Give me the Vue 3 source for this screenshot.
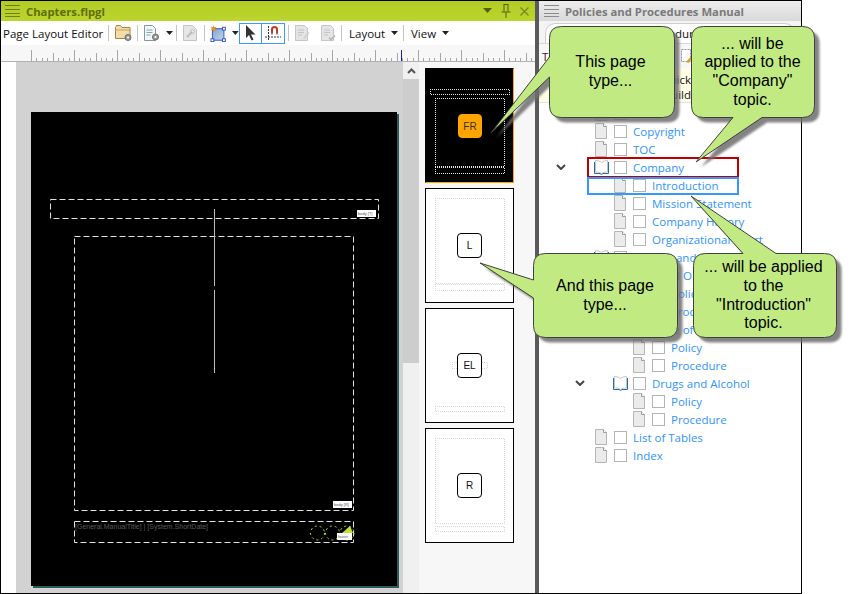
<template>
  <div class="screen">
    <!-- Page layout editor -->
    <section class="editor">
      <header class="titlebar titlebar-editor">
        <svg class="grip" width="16" height="12" viewBox="0 0 16 12">
          <path d="M0 .5h15M0 4.500h15M0 8.500h15M0 11.500h15" stroke="#6f7f12" fill="none" />
        </svg>
        <span class="title-text">Chapters.flpgl</span>
        <span class="title-actions">
          <svg width="9" height="6" viewBox="0 0 9 6"><path d="M0 0h9L4.500 5z" fill="#55600e" /></svg>
          <svg width="10" height="14" viewBox="0 0 10 14">
            <path d="M2.500.5h5M3 .5v7M7 .5v7M.5 8h9M5 8v6" stroke="#55600e" fill="none" />
          </svg>
          <svg width="9" height="9" viewBox="0 0 9 9"><path d="M.5.500l8 8M8.500.500l-8 8" stroke="#7b8a1e" stroke-width="1.4" /></svg>
        </span>
      </header>

      <div class="toolbar">
        <span class="tb-label">Page Layout Editor</span>
        <i class="sep"></i>
        <span class="slot slot-folder">
          <svg width="17" height="16" viewBox="0 0 17 16">
            <path d="M.5 2.500l1-2h4l1.500 2h8v11H.5z" fill="#f3dda6" stroke="#a9823f" />
            <path d="M.5 5h15" stroke="#c9a45e" />
            <circle cx="13" cy="12.500" r="3" fill="#9a9a9a" stroke="#6d6d6d" />
            <circle cx="13" cy="12.500" r="1" fill="#fff" />
          </svg>
        </span>
        <i class="sep"></i>
        <span class="slot slot-doc">
          <svg width="17" height="16" viewBox="0 0 17 16">
            <path d="M1.500.5h8l3 3v12h-11z" fill="#f2f6f6" stroke="#7f9aa0" />
            <path d="M3.500 5h6M3.500 7.500h6M3.500 10h4" stroke="#8aa3a8" />
            <circle cx="12.500" cy="12" r="3" fill="#9a9a9a" stroke="#6d6d6d" />
            <circle cx="12.500" cy="12" r="1" fill="#fff" />
          </svg>
          <svg class="caret" width="7" height="4" viewBox="0 0 7 4"><path d="M0 0h7L3.500 4z" fill="#222" /></svg>
        </span>
        <i class="sep"></i>
        <span class="slot slot-wrench">
          <svg width="14" height="16" viewBox="0 0 14 16">
            <path d="M.5.500h9l4 4v11H.5z" fill="#e6e6e6" stroke="#c4c4c4" />
            <path d="M4 12l5-5" stroke="#bdbdbd" stroke-width="2" />
            <circle cx="9.500" cy="6.500" r="2" fill="none" stroke="#bdbdbd" />
          </svg>
        </span>
        <i class="sep"></i>
        <span class="slot slot-shape">
          <svg width="17" height="17" viewBox="0 0 17 17">
            <defs>
              <linearGradient id="shapeFill" x1="0" y1="0" x2="1" y2="1">
                <stop offset="0" stop-color="#7fa3cf" />
                <stop offset="1" stop-color="#c6d6e6" />
              </linearGradient>
            </defs>
            <rect x="2.500" y="3.500" width="12" height="12" fill="url(#shapeFill)" stroke="#2f55c8" />
            <rect x="13" y="2" width="3" height="3" fill="#fff" stroke="#2f55c8" />
            <rect x="1" y="14" width="3" height="3" fill="#fff" stroke="#2f55c8" />
            <rect x="13" y="14" width="3" height="3" fill="#fff" stroke="#2f55c8" />
            <path d="M3.500 0l1 2 2-.5-1 2 1.500 1.500-2.200.2L4 7.500 3 5.200l-2.500 0 1.500-1.700L1 1.500l2 .5z" fill="#f08a1c" />
          </svg>
          <svg class="caret" width="7" height="4" viewBox="0 0 7 4"><path d="M0 0h7L3.500 4z" fill="#222" /></svg>
        </span>
        <span class="tool-btn">
          <svg width="11" height="16" viewBox="0 0 11 16">
            <path d="M1 0v13l3-3 2.500 5.500 2-1L6 9.500h4.500z" fill="#333" />
          </svg>
        </span>
        <span class="tool-btn tool-btn-next">
          <svg width="17" height="16" viewBox="0 0 17 16">
            <path d="M6 8V4.500a3.500 3.500 0 0 1 7 0V8h-2V4.500a1.500 1.500 0 0 0-3 0V8z" fill="#c0392b" />
            <path d="M6 8h2v1.500H6zM11 8h2v1.500h-2z" fill="#8a8a8a" />
            <path d="M3.500 1v14M0 12h16" stroke="#333" stroke-dasharray="2 1" fill="none" />
          </svg>
        </span>
        <i class="sep sep-after-tools"></i>
        <span class="slot slot-dim">
          <svg width="15" height="16" viewBox="0 0 15 16">
            <path d="M.5.500h9l3 3v12H.5z" fill="#e4e4e4" stroke="#c6c6c6" />
            <path d="M3 5h6M3 7.500h6M3 10h4" stroke="#c4c4c4" />
            <path d="M8 13l5-6 1.500 1-5 6z" fill="#d0d0d0" />
          </svg>
        </span>
        <span class="slot slot-dim">
          <svg width="15" height="16" viewBox="0 0 15 16">
            <path d="M.5.500h9l3 3v12H.5z" fill="#e4e4e4" stroke="#c6c6c6" />
            <path d="M3 5h6M3 7.500h6M3 10h4" stroke="#c4c4c4" />
            <path d="M8 12.500l2 2 4-4" stroke="#b4b4b4" stroke-width="1.600" fill="none" />
          </svg>
        </span>
        <i class="sep"></i>
        <span class="slot slot-menu">
          Layout
          <svg class="caret" width="7" height="4" viewBox="0 0 7 4"><path d="M0 0h7L3.500 4z" fill="#222" /></svg>
        </span>
        <i class="sep"></i>
        <span class="slot slot-menu slot-view">
          View
          <svg class="caret" width="7" height="4" viewBox="0 0 7 4"><path d="M0 0h7L3.500 4z" fill="#222" /></svg>
        </span>
      </div>

      <div class="ruler">
        <svg width="535" height="17" viewBox="0 0 535 17">
          <path :d="rulerTicks" stroke="#a6a6a6" fill="none" />
          <path d="M400.500 5v11" stroke="#1a1aa8" fill="none" />
          <path d="M0 16.500h535" stroke="#b0b0b0" fill="none" />
        </svg>
      </div>

      <div class="workspace">
        <div class="gutter"></div>
        <div class="canvas">
          <div class="page">
            <svg class="page-marks" width="366" height="474" viewBox="0 0 366 474">
              <rect x="19.500" y="87.500" width="328" height="19" class="dash" />
              <rect x="43.500" y="124.500" width="279" height="274" class="dash" />
              <rect x="43.500" y="409.500" width="279" height="21" class="dash" />
              <path d="M183.500 97v77M183.500 178v83" stroke="#bdbdbd" fill="none" />
              <g fill="none" stroke="#c6de30" stroke-dasharray="2 3">
                <circle cx="286.500" cy="421" r="7" />
                <circle cx="301.500" cy="421" r="7" />
                <circle cx="316" cy="421" r="7" />
              </g>
              <path d="M311 421l8-7 3 7z" fill="#c6de30" />
            </svg>
            <span class="tag tag-header">body [T]</span>
            <span class="tag tag-main">body [R]</span>
            <span class="tag tag-footer">footer</span>
            <span class="footer-text">[General.ManualTitle] | [System.ShortDate]</span>
          </div>
        </div>
        <div class="scrollbar">
          <div class="scroll-up">
            <svg width="9" height="6" viewBox="0 0 9 6"><path d="M1 5l3.500-3.500L8 5" stroke="#555" stroke-width="2" fill="none" /></svg>
          </div>
          <div class="scroll-thumb"></div>
        </div>
        <div class="thumbs">
          <div v-for="t in thumbs" :key="t.name" :class="['thumb', { 'thumb-active': t.active }]">
            <svg class="thumb-marks" width="89" height="115" viewBox="0 0 89 115">
              <rect
                v-for="(b, i) in t.boxes"
                :key="i"
                :x="b[0] + 0.5"
                :y="b[1] + 0.5"
                :width="b[2]"
                :height="b[3]"
                class="dots"
              />
            </svg>
            <span class="badge">{{ t.name }}</span>
          </div>
        </div>
      </div>
    </section>

    <div class="divider"></div>

    <!-- Outline / TOC panel -->
    <section class="outline">
      <header class="titlebar titlebar-outline">
        <svg class="grip" width="16" height="12" viewBox="0 0 16 12">
          <path d="M0 .5h15M0 4.500h15M0 8.500h15M0 11.500h15" stroke="#8b8b8b" fill="none" />
        </svg>
        <span class="title-text">Policies and Procedures Manual</span>
      </header>

      <div class="tabstrip">
        <span class="tab">Policies and Procedures</span>
      </div>
      <div class="outline-tools">
        <span class="outline-t">Tools</span>
        <svg class="outline-icon" width="14" height="16" viewBox="0 0 14 16">
          <path d="M.5 1.500h9v12h-9z" fill="#fff" stroke="#999" stroke-dasharray="2 1" />
          <path d="M5 14l6-7 1.500 1-5 7z" fill="#d9a21f" />
        </svg>
      </div>
      <div class="hintbar">
        <span>Quick</span>
        <span>Build</span>
      </div>

      <div class="tree">
        <div
          v-for="row in rows"
          :key="row.label + row.top"
          class="row"
          :style="{ paddingLeft: 15 + row.level * 19 + 'px' }"
        >
          <span class="chev">
            <svg v-if="row.book" width="10" height="6" viewBox="0 0 10 6">
              <path d="M1 1l4 4 4-4" stroke="#444" stroke-width="2" fill="none" />
            </svg>
          </span>
          <svg v-if="row.book" class="ico ico-book" width="15" height="15" viewBox="0 0 15 15">
            <path d="M7.500 2.500C6 1 3 .5 1.500.5V12c2 0 4.500.3 6 1.500 1.500-1.200 4-1.500 6-1.500V.5c-1.500 0-4.500.5-6 2z" fill="#fff" stroke="#b9c6d0" />
            <path d="M.5 2v11.500h5.500l1.500 1 1.500-1h5.500V2" fill="none" stroke="#2a6aa0" />
          </svg>
          <svg v-else class="ico ico-file" width="12" height="16" viewBox="0 0 12 16">
            <path d="M.5.500h8l3 3v12H.5z" fill="#ebebeb" stroke="#b5b5b5" />
            <path d="M8.500.500v3h3" fill="#fff" stroke="#9b9b9b" />
          </svg>
          <span class="check"></span>
          <span :class="['label', { 'label-plain': row.plain }]">{{ row.label }}</span>
        </div>
        <div class="mark mark-company"></div>
        <div class="mark mark-intro"></div>
      </div>
    </section>

    <!-- Callouts lie over both panels -->
    <svg class="callouts" width="851" height="594" viewBox="0 0 851 594">
      <g v-for="c in callouts" :key="c.id">
        <path :d="c.path" class="bubble-shadow" transform="translate(5 5)" />
      </g>
      <g v-for="c in callouts" :key="c.id + '-b'">
        <path :d="c.path" class="bubble" />
      </g>
    </svg>
    <div v-for="c in callouts" :key="c.id + '-t'" :class="['callout-text', c.id]">{{ c.text }}</div>
  </div>
</template>

<script setup>
import { computed } from 'vue'

// rounded rect with a tail spliced into one edge, points listed clockwise
const bubble = ({ x, y, w, h, edge, tail }) => {
  const r = 12
  const t = tail.map((p) => `L${p[0]} ${p[1]}`).join(' ')
  return [
    `M${x + r} ${y}`,
    edge === 'top' ? t : '',
    `H${x + w - r} Q${x + w} ${y} ${x + w} ${y + r}`,
    `V${y + h - r} Q${x + w} ${y + h} ${x + w - r} ${y + h}`,
    edge === 'bottom' ? t : '',
    `H${x + r} Q${x} ${y + h} ${x} ${y + h - r}`,
    edge === 'left' ? t : '',
    `V${y + r} Q${x} ${y} ${x + r} ${y} Z`
  ].join(' ')
}

const callouts = [
  {
    id: 'c-page',
    text: 'This page\ntype...',
    path: bubble({ x: 549.5, y: 26.5, w: 125, h: 91, edge: 'left', tail: [[549.5, 77], [491, 133], [549.5, 57]] })
  },
  {
    id: 'c-company',
    text: '... will be\napplied to the\n"Company"\ntopic.',
    path: bubble({ x: 691.5, y: 26.5, w: 123, h: 91, edge: 'bottom', tail: [[762, 117.5], [696, 162], [733, 117.5]] })
  },
  {
    id: 'c-other',
    text: 'And this page\ntype...',
    path: bubble({ x: 533.5, y: 253.5, w: 144, h: 84, edge: 'left', tail: [[533.5, 298], [480, 263], [533.5, 280]] })
  },
  {
    id: 'c-intro',
    text: '... will be applied\nto the\n"Introduction"\ntopic.',
    path: bubble({ x: 693.5, y: 253.5, w: 143, h: 84, edge: 'top', tail: [[743, 253.5], [691, 196], [776, 253.5]] })
  }
]

const rulerTicks = computed(() => {
  let d = ''
  for (let i = 0; i * 5.375 + 30 < 535; i++) {
    const x = Math.round(i * 5.375 + 30) + 0.5
    const len = i % 8 === 0 ? 11 : i % 4 === 0 ? 8 : 3
    d += `M${x} ${16 - len}v${len}`
  }
  return d
})

const thumbs = [
  { name: 'FR', active: true, boxes: [[5, 21, 79, 5], [10, 30, 69, 68], [10, 99, 69, 6]] },
  { name: 'L', boxes: [[10, 10, 69, 85], [10, 96, 69, 6]] },
  { name: 'EL', boxes: [[27, 54, 35, 6], [10, 98, 69, 5]] },
  { name: 'R', boxes: [[10, 10, 69, 85], [10, 98, 69, 5]] }
]

const rows = [
  { level: 0, label: 'Title', plain: true },
  { level: 0, label: 'Copyright' },
  { level: 0, label: 'TOC' },
  { level: 0, label: 'Company', book: true },
  { level: 1, label: 'Introduction' },
  { level: 1, label: 'Mission Statement' },
  { level: 1, label: 'Company History' },
  { level: 1, label: 'Organizational Chart' },
  { level: 0, label: 'Policies and Procedures', book: true },
  { level: 1, label: 'Legal Obligations', book: true },
  { level: 2, label: 'Policy', top: 1 },
  { level: 2, label: 'Procedure', top: 1 },
  { level: 1, label: 'Code of Conduct', book: true },
  { level: 2, label: 'Policy', top: 2 },
  { level: 2, label: 'Procedure', top: 2 },
  { level: 1, label: 'Drugs and Alcohol', book: true },
  { level: 2, label: 'Policy', top: 3 },
  { level: 2, label: 'Procedure', top: 3 },
  { level: 0, label: 'List of Tables' },
  { level: 0, label: 'Index' }
]
</script>

<style scoped>
.screen {
  position: relative;
  display: flex;
  width: 851px;
  height: 594px;
  overflow: hidden;
  background: #fff;
  font-family: "Open Sans", "Liberation Sans", sans-serif;
  font-size: 11.5px;
  color: #111;
}

.editor {
  display: flex;
  flex-direction: column;
  width: 535px;
  height: 594px;
  box-sizing: border-box;
  border-top: 1px solid #000;
  border-left: 1px solid #000;
  border-bottom: 1px solid #000;
  flex-shrink: 0;
}

.titlebar {
  display: flex;
  align-items: center;
  height: 20px;
  flex-shrink: 0;
  padding-left: 4px;
  font-weight: 700;
  font-size: 11.3px;
}

.titlebar-editor {
  background: linear-gradient(#b2cc26, #bdd62e);
  color: #5f6e0b;
}

.title-text {
  margin-left: 5px;
}

.title-actions {
  display: flex;
  align-items: center;
  gap: 9px;
  margin-left: auto;
  margin-right: 6px;
}

.toolbar {
  display: flex;
  align-items: center;
  height: 24px;
  flex-shrink: 0;
  background: #fff;
}

.tb-label {
  width: 107px;
  padding-left: 2px;
  box-sizing: border-box;
  white-space: nowrap;
}

.sep {
  width: 1px;
  height: 16px;
  background: #c4c4c4;
  flex-shrink: 0;
}

.slot {
  display: flex;
  align-items: center;
  height: 100%;
  flex-shrink: 0;
  box-sizing: border-box;
}

.slot-folder { width: 28px; padding-left: 6px; }
.slot-doc { width: 38px; padding-left: 5px; }
.slot-wrench { width: 27px; padding-left: 6px; }
.slot-shape { width: 34px; padding-left: 5px; }
.slot-dim { width: 26px; padding-left: 6px; }
.slot-menu { width: 61px; padding-left: 7px; white-space: nowrap; }
.slot-view { width: 60px; }

.caret {
  margin-left: 6px;
}

.tool-btn {
  display: flex;
  align-items: center;
  justify-content: center;
  width: 23px;
  height: 21px;
  box-sizing: border-box;
  border: 1px solid #3f9bf0;
  flex-shrink: 0;
}

.tool-btn-next {
  margin-left: -1px;
  width: 24px;
}

.sep-after-tools {
  margin-left: 3px;
}

.ruler {
  height: 17px;
  flex-shrink: 0;
  background: #f7f7f7;
}

.ruler svg {
  display: block;
}

.workspace {
  display: flex;
  flex: 1;
  min-height: 0;
}

.gutter {
  width: 15px;
  flex-shrink: 0;
  background: #fff;
}

.canvas {
  width: 387px;
  flex-shrink: 0;
  box-sizing: border-box;
  padding: 50px 0 0 15px;
  background: #d2d2d2;
}

.page {
  position: relative;
  width: 366px;
  height: 474px;
  background: #000;
  box-shadow: 2px 2px 0 #2f5a5a;
}

.page-marks {
  display: block;
}

.dash {
  fill: none;
  stroke: #e2e2e2;
  stroke-dasharray: 6 3;
}

.tag {
  position: absolute;
  height: 7px;
  padding: 0 1px;
  background: #fff;
  color: #556;
  font-size: 4px;
  line-height: 7px;
  white-space: nowrap;
  font-family: "Liberation Sans", sans-serif;
}

.tag-header { left: 326px; top: 98px; width: 17px; }
.tag-main { left: 302px; top: 389px; width: 17px; }
.tag-footer { left: 306px; top: 421px; width: 13px; }

.footer-text {
  position: absolute;
  left: 44px;
  top: 410px;
  font-size: 7px;
  line-height: 10px;
  color: #5a5a5a;
  white-space: nowrap;
  font-family: "Liberation Sans", sans-serif;
}

.scrollbar {
  width: 16px;
  flex-shrink: 0;
  background: #f0f0f0;
}

.scroll-up {
  display: flex;
  align-items: center;
  justify-content: center;
  height: 17px;
}

.scroll-thumb {
  height: 284px;
  background: #cdcdcd;
}

.thumbs {
  display: flex;
  flex-direction: column;
  gap: 5px;
  flex: 1;
  padding: 6px 0 0 6px;
  background: #f7f7f7;
}

.thumb {
  position: relative;
  width: 89px;
  height: 115px;
  box-sizing: border-box;
  border: 1px solid #000;
  background: #fff;
}

.thumb-marks {
  position: absolute;
  left: -1px;
  top: -1px;
}

.dots {
  fill: none;
  stroke: #d6d6d6;
  stroke-dasharray: 1 1;
  stroke-dashoffset: 0.5;
  shape-rendering: crispEdges;
}

.badge {
  position: absolute;
  left: 31px;
  top: 44px;
  width: 25px;
  height: 25px;
  box-sizing: border-box;
  display: flex;
  align-items: center;
  justify-content: center;
  border: 1px solid #000;
  border-radius: 4px;
  background: #fff;
  font-size: 10px;
  font-family: "Liberation Sans", sans-serif;
}

.thumb-active {
  background: #000;
  border-color: #000 #ffa500 #ffa500 #000;
}

.thumb-active .dots {
  stroke: #e8e8e8;
}

.thumb-active .badge {
  left: 32px;
  top: 45px;
  width: 24px;
  height: 24px;
  background: #ffa500;
  border-color: #ffa500;
  color: #333;
}

.divider {
  width: 4px;
  flex-shrink: 0;
  background: #5a5a5a;
  border-top: 1px solid #000;
  border-bottom: 1px solid #000;
  box-sizing: border-box;
}

.outline {
  display: flex;
  flex-direction: column;
  width: 263px;
  height: 594px;
  box-sizing: border-box;
  flex-shrink: 0;
  border-top: 1px solid #000;
  border-right: 1px solid #000;
  border-bottom: 1px solid #000;
  background: #fff;
}

.titlebar-outline {
  background: linear-gradient(#ededed, #d9d9d9);
  color: #7a7a7a;
  padding-left: 5px;
}

.tabstrip {
  height: 23px;
  flex-shrink: 0;
  padding: 2px 6px 0 6px;
  background: #f4f4f4;
  border-bottom: 1px solid #d8d8d8;
  box-sizing: border-box;
}

.tab {
  display: block;
  height: 20px;
  line-height: 20px;
  padding-left: 32px;
  background: #fff;
  border: 1px solid #cfcfcf;
  border-bottom: none;
  border-radius: 10px 10px 0 0;
  box-sizing: border-box;
  overflow: hidden;
  white-space: nowrap;
}

.outline-tools {
  display: flex;
  align-items: center;
  justify-content: space-between;
  height: 24px;
  flex-shrink: 0;
  padding: 0 106px 0 3px;
  background: #f7f7f7;
}

.outline-t {
  color: #4a1414;
}

.hintbar {
  display: flex;
  flex-direction: column;
  align-items: flex-end;
  height: 35px;
  flex-shrink: 0;
  box-sizing: border-box;
  padding: 4px 110px 0 0;
  background: #fffde6;
  line-height: 15px;
  border-bottom: 1px solid #e2e2e2;
}

.tree {
  position: relative;
  padding-top: 1px;
}

.row {
  display: flex;
  align-items: center;
  height: 18px;
  box-sizing: border-box;
}

.chev {
  display: flex;
  align-items: center;
  justify-content: center;
  width: 14px;
  flex-shrink: 0;
}

.ico {
  flex-shrink: 0;
}

.ico-file {
  margin-left: 27px;
}

.ico-book {
  margin-left: 26px;
  margin-right: -2px;
}

.check {
  width: 13px;
  height: 13px;
  box-sizing: border-box;
  margin-left: 7px;
  flex-shrink: 0;
  border: 1px solid #b4b4b4;
  background: #fff;
}

.label {
  margin-left: 6px;
  color: #3094ff;
  white-space: nowrap;
}

.label-plain {
  color: #111;
}

.mark {
  position: absolute;
  left: 48px;
  width: 152px;
  box-sizing: border-box;
  border: 2px solid;
}

.mark-company {
  top: 54px;
  height: 21px;
  border-color: #c00000;
}

.mark-intro {
  top: 74px;
  height: 18px;
  border-color: #3399ff;
}

.callouts {
  position: absolute;
  left: 0;
  top: 0;
  pointer-events: none;
}

.bubble {
  fill: #c2ea83;
  stroke: #404040;
  stroke-width: 1;
}

.bubble-shadow {
  fill: #6e6e6e;
  opacity: 0.85;
  filter: blur(1px);
}

.callout-text {
  position: absolute;
  display: flex;
  align-items: center;
  justify-content: center;
  box-sizing: border-box;
  padding-top: 1px;
  white-space: pre-line;
  text-align: center;
  font-family: "Liberation Sans", Arial, sans-serif;
  font-size: 16px;
  line-height: 18.6px;
  color: #000;
}

.c-page { left: 548px; top: 26px; width: 125px; height: 91px; }
.c-company { left: 691px; top: 26px; width: 123px; height: 91px; }
.c-other { left: 533px; top: 253px; width: 144px; height: 84px; }
.c-intro { left: 692px; top: 253px; width: 143px; height: 84px; }
</style>
